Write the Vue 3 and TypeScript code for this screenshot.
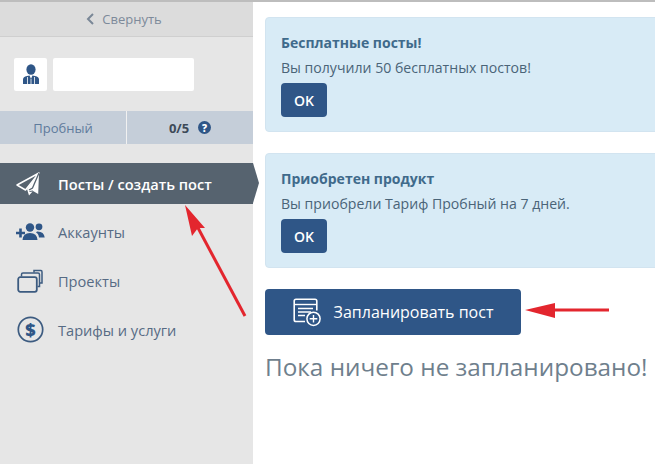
<script setup lang="ts">
const items = [
  { label: 'Аккаунты', icon: 'users' },
  { label: 'Проекты', icon: 'folders' },
  { label: 'Тарифы и услуги', icon: 'dollar' },
]
const alerts = [
  { title: 'Бесплатные посты!', text: 'Вы получили 50 бесплатных постов!' },
  { title: 'Приобретен продукт', text: 'Вы приобрели Тариф Пробный на 7 дней.' },
]
</script>

<template>
  <div class="page">
    <aside class="side">
      <div class="collapse">
        <svg class="chev" width="9" height="12" viewBox="0 0 9 12"><path d="M7 1 L2 6 L7 11" fill="none" stroke="#7a8797" stroke-width="2"/></svg>
        <span>Свернуть</span>
      </div>
      <div class="user">
        <div class="avatar">
          <svg width="18" height="21" viewBox="0 0 18 21">
            <ellipse cx="9" cy="5.5" rx="4.6" ry="5.2" fill="#2f5687"/>
            <path d="M1 20 V15.5 Q1 12.5 5 12 L7.6 11.6 L9 15 L10.4 11.6 L13 12 Q17 12.5 17 15.5 V20 Z" fill="#2f5687"/>
            <path d="M5.5 13 V20 M12.5 13 V20 M9 15 V20" stroke="#fff" stroke-width=".8"/>
          </svg>
        </div>
        <div class="name"></div>
      </div>
      <div class="plan">
        <div class="plan-name">Пробный</div>
        <div class="plan-count">
          <b>0/5</b>
          <span class="help">?</span>
        </div>
      </div>
      <nav class="nav">
        <div class="active">
          <svg class="plane" width="26" height="26" viewBox="0 0 26 26">
            <path d="M24 2 L2 14 L10.5 19 Z" fill="none" stroke="#fff" stroke-width="1.5" stroke-linejoin="round"/>
            <path d="M24 2 L23.2 23 L18 20 L14 24.5 L12 18 Z" fill="#fff"/>
            <path d="M24 2 L17.5 17 L14 19" fill="none" stroke="#56636f" stroke-width="1.3"/>
            <path d="M14.5 20.5 L18 20" stroke="#56636f" stroke-width="1"/>
          </svg>
          <span>Посты / создать пост</span>
        </div>
        <div v-for="item in items" :key="item.label" class="item">
          <span class="ico">
            <svg v-if="item.icon === 'users'" width="30" height="20" viewBox="0 0 30 20">
              <path d="M1 11 H10 M5.5 6.5 V15.5" stroke="#2f5687" stroke-width="2.6"/>
              <circle cx="15" cy="5.5" r="4.2" fill="#2f5687"/>
              <circle cx="24" cy="4.8" r="3.4" fill="#2f5687"/>
              <path d="M7.5 18 Q8 11 15 11 Q22 11 22.5 18 Z" fill="#2f5687"/>
              <path d="M22 9.5 Q29 9.2 29.7 15.5 L24 15.5 Q23.5 11.5 21 10.5 Z" fill="#2f5687"/>
            </svg>
            <svg v-else-if="item.icon === 'folders'" width="26" height="24" viewBox="0 0 26 24">
              <rect x="1.2" y="8.2" width="18.6" height="14.6" rx="2" fill="none" stroke="#3c5b80" stroke-width="1.8"/>
              <path d="M4.5 7.5 V5.5 Q4.5 4 6 4 H21 Q22.5 4 22.5 5.5 V17.5 H20.5" fill="none" stroke="#3c5b80" stroke-width="1.5"/>
              <path d="M17 3.5 V1.6 H24 Q25 1.6 25 3 V14 H23" fill="none" stroke="#3c5b80" stroke-width="1.5"/>
            </svg>
            <svg v-else width="27" height="27" viewBox="0 0 27 27">
              <circle cx="13.5" cy="13.5" r="12.2" fill="none" stroke="#3c5b80" stroke-width="1.7"/>
              <text x="13.5" y="20" text-anchor="middle" class="dollar">$</text>
            </svg>
          </span>
          <span>{{ item.label }}</span>
        </div>
      </nav>
    </aside>

    <main class="main">
      <section v-for="a in alerts" :key="a.title" class="alert">
        <h4>{{ a.title }}</h4>
        <p>{{ a.text }}</p>
        <button class="ok">OK</button>
      </section>
      <button class="plan-post">
        <svg width="28" height="29" viewBox="0 0 28 29">
          <path d="M12 23.5 H3 Q1.2 23.5 1.2 21.7 V3 Q1.2 1.2 3 1.2 H22 Q23.8 1.2 23.8 3 V12.5" fill="none" stroke="#fff" stroke-width="1.6"/>
          <path d="M1.5 6.5 H23.5" stroke="#fff" stroke-width="1.4"/>
          <path d="M5 10.5 H20 M5 14 H18 M5 17.5 H12" stroke="#fff" stroke-width="1.3"/>
          <circle cx="20.5" cy="20.8" r="6.6" fill="#2f5687" stroke="#fff" stroke-width="1.5"/>
          <path d="M20.5 17 V24.6 M16.7 20.8 H24.3" stroke="#fff" stroke-width="1.4"/>
        </svg>
        <span>Запланировать пост</span>
      </button>
      <h2 class="empty">Пока ничего не запланировано!</h2>
    </main>

    <svg class="arrows" width="655" height="464" viewBox="0 0 655 464">
      <path d="M245 316 L197 226" stroke="#e3262e" stroke-width="3" fill="none"/>
      <path d="M185 205 L205 228 L198 228 L192 236 Z" fill="#e3262e"/>
      <path d="M609 310 L552 310" stroke="#e3262e" stroke-width="3" fill="none"/>
      <path d="M525 310 L555 303 L555 318 Z" fill="#e3262e"/>
    </svg>
  </div>
</template>

<style scoped>
.page {
  position: relative;
  display: flex;
  width: 655px;
  height: 464px;
  overflow: hidden;
  background: #fff;
  border-top: 2px solid #bdbdbd;
  box-sizing: border-box;
  font-family: "Open Sans", "Noto Sans", sans-serif;
  font-size: 14px;
  color: #42566b;
}
.side {
  flex: none;
  width: 253px;
  background: #e6e6e6;
}
.collapse {
  display: flex;
  align-items: center;
  justify-content: center;
  gap: 7px;
  height: 35px;
  background: #dcdcdc;
  border-bottom: 1px solid #cfcfcf;
  box-sizing: border-box;
  color: #7d8a9a;
  font-size: 13px;
  padding-right: 5px;
}
.user {
  display: flex;
  align-items: center;
  gap: 6px;
  height: 74px;
  padding-left: 14px;
  box-sizing: border-box;
}
.avatar {
  display: flex;
  align-items: center;
  justify-content: center;
  width: 33px;
  height: 33px;
  background: #fff;
  border-radius: 2px;
}
.name {
  width: 141px;
  height: 33px;
  background: #fff;
  border-radius: 2px;
}
.plan {
  display: flex;
  height: 33px;
  background: #c5ced9;
}
.plan-name {
  display: flex;
  align-items: center;
  justify-content: center;
  width: 126px;
  border-right: 1px solid #f1f1f1;
  color: #5f7b9c;
  font-size: 13px;
}
.plan-count {
  flex: 1;
  display: flex;
  align-items: center;
  justify-content: center;
  gap: 9px;
  color: #3d4a58;
  font-size: 13px;
}
.plan-count b { font-weight: 700; }
.help {
  display: flex;
  align-items: center;
  justify-content: center;
  width: 13px;
  height: 13px;
  border-radius: 50%;
  background: #2f5687;
  color: #fff;
  font-size: 10px;
  font-weight: 800;
}
.nav { padding-top: 19px; }
.active {
  position: relative;
  display: flex;
  align-items: center;
  height: 41px;
  padding-left: 15px;
  gap: 17px;
  background: #56636f;
  color: #fff;
  font-weight: 600;
  font-size: 14.6px;
}
.active::after {
  content: "";
  position: absolute;
  left: 100%;
  top: 0;
  border-top: 20.5px solid transparent;
  border-bottom: 20.5px solid transparent;
  border-left: 6px solid #56636f;
}
.plane { flex: none; }
.item {
  display: flex;
  align-items: center;
  height: 49px;
  color: #566b84;
  font-size: 14.6px;
}
.active + .item { margin-top: 3px; }
.ico {
  display: flex;
  align-items: center;
  justify-content: center;
  width: 30px;
  margin: 0 13px 0 15px;
}
.dollar {
  font-family: "Open Sans", sans-serif;
  font-weight: 800;
  font-size: 18px;
  fill: #2f5687;
}
.main {
  flex: none;
  width: 420px;
  padding: 15px 0 0 12px;
  box-sizing: border-box;
}
.alert {
  width: 420px;
  height: 115px;
  margin-bottom: 21px;
  padding: 15px;
  box-sizing: border-box;
  background: #d8ebf6;
  border: 1px solid #d2e4f0;
  border-radius: 4px;
  color: #4a6478;
}
.alert h4 {
  margin: 0;
  font-size: 14px;
  line-height: 20px;
  font-weight: 700;
  color: #3f6a8b;
}
.alert p {
  margin: 5px 0 5px;
  font-size: 14.1px;
  line-height: 20px;
}
.ok {
  display: block;
  width: 46px;
  height: 34px;
  padding: 0;
  border: 0;
  border-radius: 4px;
  background: #2f5687;
  color: #fff;
  font: 600 14px "Open Sans", sans-serif;
}
.plan-post {
  display: flex;
  align-items: center;
  justify-content: center;
  gap: 13px;
  width: 256px;
  height: 46px;
  padding: 0;
  border: 0;
  border-radius: 4px;
  background: #2f5687;
  color: #fff;
  font: 400 16px "Open Sans", sans-serif;
}
.empty {
  margin: 15px 0 0;
  font-size: 24.3px;
  line-height: 34px;
  font-weight: 400;
  color: #6f7f8d;
  white-space: nowrap;
}
.arrows {
  position: absolute;
  left: 0;
  top: -2px;
  pointer-events: none;
}
</style>
